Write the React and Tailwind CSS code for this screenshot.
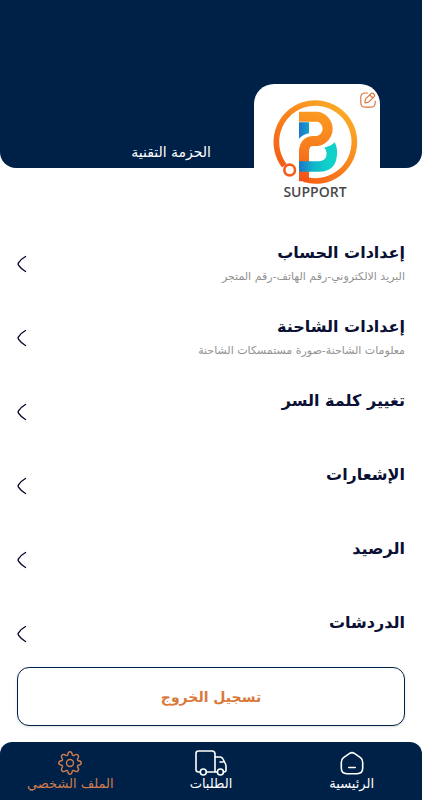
import React from "react";

const settings = [
	{ title: "إعدادات الحساب", details: "البريد الالكتروني-رقم الهاتف-رقم المتجر" },
	{ title: "إعدادات الشاحنة", details: "معلومات الشاحنة-صورة مستمسكات الشاحنة" },
	{ title: "تغيير كلمة السر" },
	{ title: "الإشعارات" },
	{ title: "الرصيد" },
	{ title: "الدردشات" },
];

const Logo = () => (
	<svg viewBox="93 68 264 264" className="w-[88px] h-[88px]" fill="none" aria-hidden="true">
		<defs>
			<linearGradient id="ring" gradientUnits="userSpaceOnUse" x1="300" y1="90" x2="130" y2="290">
				<stop offset="0" stopColor="#fbab25" />
				<stop offset="1" stopColor="#f55a15" />
			</linearGradient>
			<linearGradient id="letter" gradientUnits="userSpaceOnUse" x1="230" y1="110" x2="190" y2="318">
				<stop offset="0" stopColor="#fb9a20" />
				<stop offset="0.6" stopColor="#f6781c" />
				<stop offset="1" stopColor="#f4501a" />
			</linearGradient>
			<linearGradient id="teal" gradientUnits="userSpaceOnUse" x1="177" y1="0" x2="262" y2="0">
				<stop offset="0" stopColor="#1b74c9" />
				<stop offset="0.5" stopColor="#12b5c9" />
				<stop offset="1" stopColor="#10d0c8" />
			</linearGradient>
		</defs>
		<path d="M133 271A117 117 0 1 1 192 312" stroke="url(#ring)" strokeWidth="17" />
		<circle cx="149" cy="284" r="16" stroke="#f35f1c" strokeWidth="8" fill="#fff" />
		<path d="M177 141H207V174Q188 178 177 190Z" fill="url(#teal)" />
		<path d="M177 124H232A37 37 0 0 1 232 197H222Q192 197 192 230V318" stroke="url(#letter)" strokeWidth="30" />
		<path d="M177 258H235Q260 258 260 234Q260 224 253 217Q274 212 284 201Q292 215 291 236Q289 289 237 289H177Z" fill="url(#teal)" />
	</svg>
);

const EditIcon = () => (
	<svg viewBox="0 0 16 16" className="w-4 h-4" fill="none" stroke="currentColor" strokeWidth="1.2" strokeLinecap="round" strokeLinejoin="round">
		<path d="M7.5 1H5.5C2.2 1 .8 2.4.8 5.5V10.5C.8 13.8 2.2 15.2 5.5 15.2H10.5C13.8 15.2 15.2 13.8 15.2 10.5V9" />
		<path d="M11 1.6 5.7 6.9C5.1 7.700 5 9.2 5 10.8C6.8 10.8 8.1 10.6 8.8 9.9L14.2 4.6C15.5 3 12.8.2 11 1.6ZM10 2.7C10.6 4.4 11.6 5.3 13.2 5.7" />
	</svg>
);

const ChevronIcon = () => (
	<svg viewBox="0 0 10 18" className="w-[10px] h-[18px] shrink-0" fill="none" stroke="#050a2c" strokeWidth="1.4" strokeLinecap="round">
		<path d="M8.5 1.5C5.5 3.2 3 5.5 1.5 7.8Q.8 9 1.5 10.2C3 12.5 5.5 14.8 8.5 16.5" />
	</svg>
);

const HomeIcon = () => (
	<svg viewBox="0 0 24 24" className="w-6 h-6" fill="none" stroke="currentColor" strokeWidth="1.6" strokeLinecap="round" strokeLinejoin="round">
		<path d="M10 2.2 3.5 6.6C2 7.6 1.3 9.5 1.3 11.5V17C1.3 21 3 22.7 7 22.7H17C21 22.7 22.7 21 22.7 17V11.5C22.7 9.5 22 7.6 20.5 6.6L14 2.2Q12 1 10 2.2Z" />
		<path d="M8.8 16.5H15.2" />
	</svg>
);

const TruckIcon = () => (
	<svg viewBox="0 0 32 26" className="w-8 h-[26px]" fill="none" stroke="currentColor" strokeWidth="1.6" strokeLinecap="round" strokeLinejoin="round">
		<path d="M4.5 22H3.5Q1 22 1 19.5V3.5Q1 1 3.5 1H17Q20 1 20 4V22H12" />
		<path d="M20 7H25Q27 7 28 9L30.5 14Q31 15 31 16V20Q31 22 28.8 22M20.5 22H22M25 12H28" />
		<circle cx="8.3" cy="22" r="3" />
		<circle cx="25.4" cy="22" r="3" />
	</svg>
);

// Eight rounded teeth around the hub
const GearIcon = () => (
	<svg viewBox="0 0 24 24" className="w-6 h-6" fill="none" stroke="currentColor" strokeWidth="1.4" strokeLinejoin="round">
		<path d="M9.8 3.7Q10 .8 12 .8T14.2 3.7Q14.8 4.9 16.3 4.3Q18.5 2.6 19.9 4.1T19.7 7.7Q19.1 9.2 20.3 9.8Q23.2 10 23.2 12T20.3 14.2Q19.1 14.8 19.7 16.3Q21.4 18.5 19.9 19.9T16.3 19.7Q14.8 19.1 14.2 20.3Q14 23.2 12 23.2T9.8 20.3Q9.2 19.1 7.7 19.7Q5.5 21.4 4.1 19.9T4.3 16.3Q4.9 14.8 3.7 14.2Q.8 14 .8 12T3.7 9.8Q4.9 9.2 4.3 7.7Q2.6 5.5 4.1 4.1T7.7 4.3Q9.2 4.9 9.8 3.7Z" />
		<circle cx="12" cy="12" r="3.5" />
	</svg>
);

const SettingRow = ({ title, details }) => (
	<button className="w-full min-h-[74px] flex items-start justify-between text-start">
		<span className="flex flex-col">
			<span className="text-base leading-7 font-bold text-[#0a1033]">{title}</span>
			{details && <span className="text-[11px] leading-5 text-[#929292]">{details}</span>}
		</span>
		<span className="pt-4">
			<ChevronIcon />
		</span>
	</button>
);

const NavItem = ({ label, active, children }) => (
	<a
		href="#"
		aria-current={active ? "page" : undefined}
		className={`flex-1 flex flex-col items-center ${active ? "text-[#d07d50]" : "text-white"}`}
	>
		<span className="h-[26px] flex items-center">{children}</span>
		<span className="text-[13px] leading-4">{label}</span>
	</a>
);

function App() {
	return (
		<div dir="rtl" className="min-h-screen flex flex-col bg-white font-['DejaVu_Sans',sans-serif]">
			<header className="bg-[#002147] rounded-b-2xl pt-[84px] px-[42px] flex items-start gap-[43px]">
				<div className="relative -mb-[42px] w-[126px] h-[126px] shrink-0 rounded-t-[20px] rounded-b-2xl bg-white flex flex-col items-center pt-[14px] pr-1">
					<Logo />
					<span dir="ltr" className="font-['Open_Sans',sans-serif] text-sm leading-3 font-semibold text-[#48484a]">
						SUPPORT
					</span>
					<button aria-label="تعديل الصورة" className="absolute top-2 right-1 text-[#d9753b]">
						<EditIcon />
					</button>
				</div>
				<h1 className="pt-14 text-sm leading-6 text-white">الحزمة التقنية</h1>
			</header>

			<main className="flex-1 flex flex-col px-[17px] pt-[71px]">
				{settings.map((item) => (
					<SettingRow key={item.title} title={item.title} details={item.details} />
				))}
			</main>

			<div className="px-[17px] pb-4 -mt-4">
				<button className="w-full h-[59px] rounded-xl border border-[#002147] bg-white shadow-sm text-sm font-bold text-[#d9793d]">
					تسجيل الخروج
				</button>
			</div>

			<nav className="bg-[#002147] rounded-t-xl flex pt-2 pb-2">
				<NavItem label="الرئيسية">
					<HomeIcon />
				</NavItem>
				<NavItem label="الطلبات">
					<TruckIcon />
				</NavItem>
				<NavItem label="الملف الشخصي" active>
					<GearIcon />
				</NavItem>
			</nav>
		</div>
	);
}

export default App;
